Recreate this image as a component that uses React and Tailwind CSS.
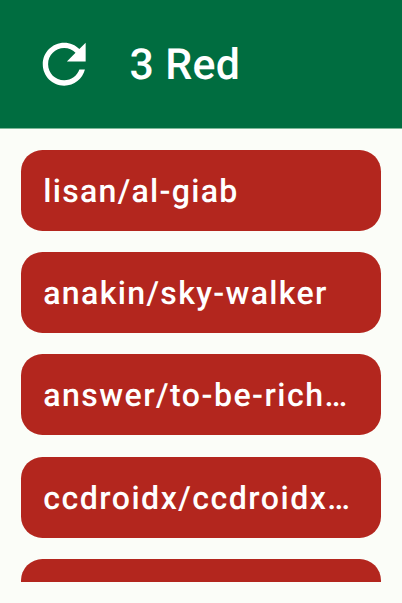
const projects = [
  { name: 'lisan/al-giab', tracking: 'tracking-[1.3px]' },
  { name: 'anakin/sky-walker', tracking: 'tracking-[1.34px]' },
  { name: 'answer/to-be-rich…', tracking: 'tracking-[1.48px]' },
  { name: 'ccdroidx/ccdroidx…', tracking: 'tracking-[1.5px]' },
  { name: '', tracking: 'tracking-[1.34px]' },
];

function RefreshIcon() {
  return (
    <svg viewBox="0 0 24 24" className="size-[64.4px] shrink-0" fill="white" aria-label="Refresh">
      <path d="M17.65 6.35C16.2 4.9 14.21 4 12 4c-4.42 0-7.99 3.58-7.99 8s3.57 8 7.99 8c3.73 0 6.84-2.55 7.73-6h-2.08c-.82 2.33-3.04 4-5.65 4-3.31 0-6-2.69-6-6s2.69-6 6-6c1.66 0 3.14.69 4.22 1.78L13 11h7V4l-2.35 2.35z" />
    </svg>
  );
}

export default function App() {
  return (
    <div className="flex h-[603px] w-[402px] flex-col overflow-hidden bg-[#fbfdf8] font-['Roboto',sans-serif] font-medium text-white [text-rendering:geometricPrecision]">
      <header className="flex h-[129px] shrink-0 items-center gap-8 border-b border-[#7db798] bg-[#006d40] pl-8">
        <RefreshIcon />
        <h1 className="whitespace-nowrap pt-0.5 pl-px text-[42.8px] leading-[64px] tracking-[0.4px]">3 Red</h1>
      </header>
      <main className="flex h-[453px] shrink-0 flex-col gap-[21.2px] overflow-hidden px-[21.4px] pt-[21px]">
        {projects.map(({ name, tracking }, i) => (
          <div
            key={i}
            className="flex h-[81px] shrink-0 items-center rounded-[21.4px] bg-[#b3261e] pl-[21.8px]"
          >
            <span className={`whitespace-nowrap pt-0.5 text-[32.1px] leading-[43px] ${tracking}`}>{name}</span>
          </div>
        ))}
      </main>
    </div>
  );
}
